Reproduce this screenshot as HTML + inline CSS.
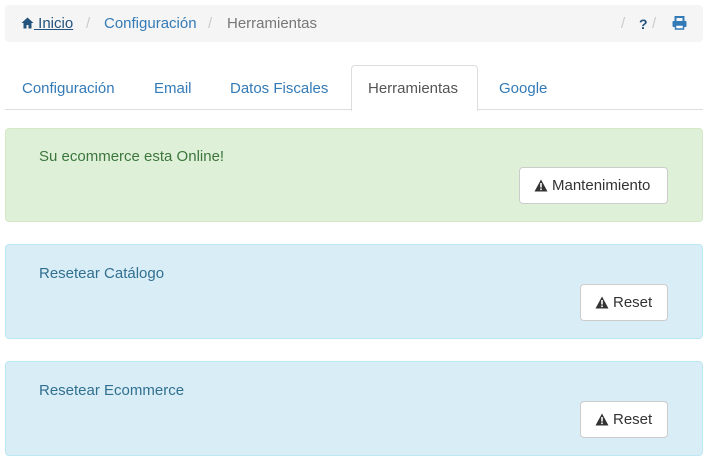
<!DOCTYPE html>
<html><head><meta charset="utf-8"><style>
body{margin:0;width:711px;height:471px;background:#fff;font-family:"Liberation Sans",Arial,sans-serif;font-size:15px;color:#333;position:relative;overflow:hidden}
.bc{position:absolute;left:5px;top:5px;width:698px;height:37px;background:#f5f5f5;border-radius:4px}
.bc span{position:absolute;top:10px;line-height:18px}
a{color:#337ab7;text-decoration:none}
.sep{color:#ccc}
.tabs{position:absolute;left:5px;top:109px;width:698px;border-top:1px solid #ddd}
.tab{position:absolute;top:89px;line-height:18px;color:#337ab7;transform:translateY(-50%)}
.act{position:absolute;left:351px;top:65px;width:127px;height:46px;border:1px solid #ddd;border-bottom:none;border-radius:4px 4px 0 0;background:#fff;box-sizing:border-box}
.al{position:absolute;left:5px;width:698px;border-radius:4px;box-sizing:border-box;border:1px solid}
.g{background:#dff0d8;border-color:#d6e9c6;color:#3c763d}
.b{background:#d9edf7;border-color:#bce8f1;color:#31708f}
.al .t{position:absolute;left:33px;line-height:18px}
.btn{position:absolute;background:#fff;border:1px solid #ccc;border-radius:4px;height:37px;box-sizing:border-box;color:#333;line-height:36px;padding-left:14px}
.btn svg{vertical-align:-2px;margin-right:4px}
</style></head><body>
<div class="bc">
<span style="left:16px"><a href="#" style="color:#23527c;text-decoration:underline"><svg width="13" height="12" viewBox="0 0 13 12" style="vertical-align:-1px"><path d="M6.5 0.5L0.5 6h2v5.5h3V8h2v3.5h3V6h2z" fill="#23527c"/></svg> Inicio</a></span>
<span class="sep" style="left:81px">/</span>
<span style="left:99px"><a href="#">Configuración</a></span>
<span class="sep" style="left:203px">/</span>
<span style="left:222px;color:#777">Herramientas</span>
<span class="sep" style="left:616px">/</span>
<span style="left:634px;color:#23527c;font-weight:bold;font-size:14px">?</span>
<span class="sep" style="left:647px">/</span>
<span style="left:667px;top:11px"><svg width="15" height="14" viewBox="0 0 15 14"><rect x="3.5" y="1" width="8" height="5" fill="none" stroke="#337ab7" stroke-width="2"/><rect x="0.5" y="5" width="14" height="6" rx="1" fill="#337ab7"/><rect x="3.5" y="9" width="8" height="4" fill="#fff" stroke="#337ab7" stroke-width="1.5"/></svg></span>
</div>
<div class="tabs"></div>
<div class="act"></div>
<span class="tab" style="left:22px">Configuración</span>
<span class="tab" style="left:154px">Email</span>
<span class="tab" style="left:230px">Datos Fiscales</span>
<span class="tab" style="left:368px;color:#555">Herramientas</span>
<span class="tab" style="left:499px">Google</span>

<div class="al g" style="top:128px;height:94px"><span class="t" style="top:19px">Su ecommerce esta Online!</span></div>
<div class="btn" style="left:519px;top:167px;width:149px"><svg width="14" height="13" viewBox="0 0 14 13"><path d="M7 0.5L13.5 12.5H0.5Z" fill="#333"/><rect x="6.2" y="4" width="1.6" height="4.5" fill="#fff"/><rect x="6.2" y="9.5" width="1.6" height="1.6" fill="#fff"/></svg>Mantenimiento</div>

<div class="al b" style="top:244px;height:95px"><span class="t" style="top:20px">Resetear Catálogo</span></div>
<div class="btn" style="left:580px;top:284px;width:88px"><svg width="14" height="13" viewBox="0 0 14 13"><path d="M7 0.5L13.5 12.5H0.5Z" fill="#333"/><rect x="6.2" y="4" width="1.6" height="4.5" fill="#fff"/><rect x="6.2" y="9.5" width="1.6" height="1.6" fill="#fff"/></svg>Reset</div>

<div class="al b" style="top:361px;height:95px"><span class="t" style="top:20px">Resetear Ecommerce</span></div>
<div class="btn" style="left:580px;top:401px;width:88px"><svg width="14" height="13" viewBox="0 0 14 13"><path d="M7 0.5L13.5 12.5H0.5Z" fill="#333"/><rect x="6.2" y="4" width="1.6" height="4.5" fill="#fff"/><rect x="6.2" y="9.5" width="1.6" height="1.6" fill="#fff"/></svg>Reset</div>
</body></html>
